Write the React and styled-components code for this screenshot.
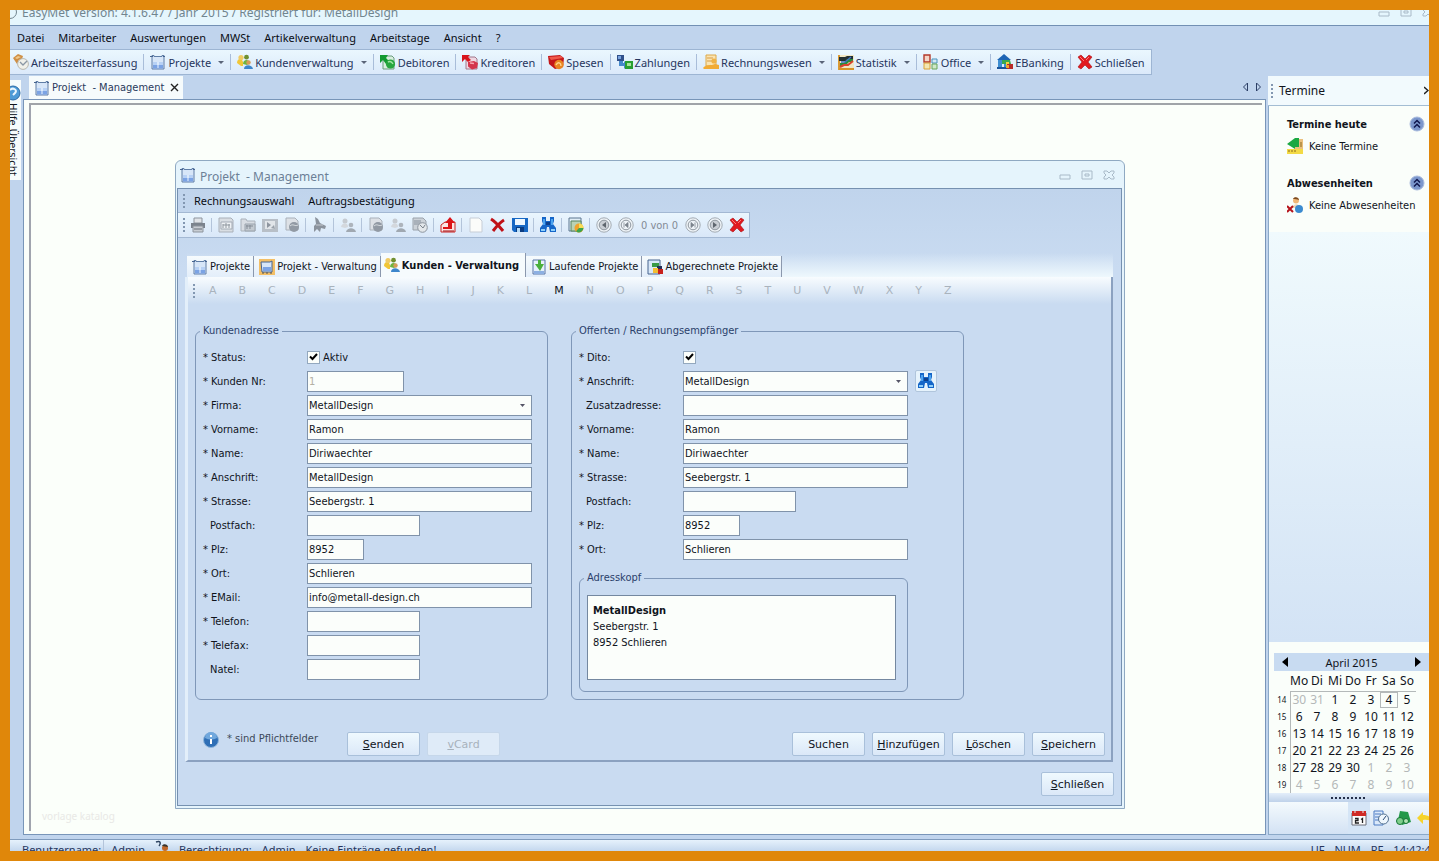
import React, { useState } from "react";
import styled, { createGlobalStyle, css } from "styled-components";

const ui = `"Noto Sans", "Open Sans", sans-serif`;
const tahoma = `"DejaVu Sans Condensed", "DejaVu Sans", sans-serif`;
const verdana = `"DejaVu Sans", sans-serif`;

const caret = `url("data:image/svg+xml,%3Csvg xmlns='http://www.w3.org/2000/svg' width='5' height='3'%3E%3Cpath d='M0 0h5L2.5 3z' fill='%23556'/%3E%3C/svg%3E")`;
const check = `url("data:image/svg+xml,%3Csvg xmlns='http://www.w3.org/2000/svg' width='9' height='8'%3E%3Cpath d='M1 3.5L3.5 6 8 1' fill='none' stroke='%23000' stroke-width='2'/%3E%3C/svg%3E")`;

/* ---------- icons ---------- */

const drawings = {
  clock: (
    <>
      <path d="M0 4 5 0l5 2-1 3-3 1-2 4-2-3z" fill="#cf8f45" />
      <path d="M2 4l3-2 3 1-4 2z" fill="#f0c98c" />
      <circle cx="10" cy="10" r="5.4" fill="#f1f1ea" stroke="#b9b7ae" />
      <path d="M7 8l3 3 4-4" fill="none" stroke="#8a97a5" strokeWidth="1.3" />
    </>
  ),
  project: (
    <>
      <path d="M2 1.5h2v1h8v-1h2V15H2z" fill="#d7e6f8" stroke="#5f7da6" />
      <path d="M0 2.5h3M13 2.5h2" stroke="#47648f" />
      <path d="M3 8h4.5v3H3zM8.5 8H13v3H8.5z" fill="#b7d1f5" />
      <path d="M3 11h10v3.5H3z" fill="#7ba3e4" />
      <path d="M8 8v6" stroke="#eef6ff" />
    </>
  ),
  people: (
    <>
      <path d="M0 9c0-5 5-5 6-1v4H4z" fill="#f1c637" />
      <circle cx="4" cy="3.5" r="2.6" fill="#f0ca62" />
      <circle cx="9.5" cy="3.2" r="2.4" fill="#6f8f2f" />
      <path d="M6 10c0-5 6-5 7-1l-3 2z" fill="#6eb43f" />
      <circle cx="11.5" cy="8.5" r="2.2" fill="#d49c58" />
      <path d="M7 15c0-5 8-5 9 0z" fill="#3d86cc" />
    </>
  ),
  debit: (
    <>
      <path d="M3 2h9l2 2v11H3z" fill="#d9efe0" stroke="#6b9b7c" />
      <path d="M0 1h8L6 4l3 3-3 3-3-4-3 3z" fill="#129a31" />
      <circle cx="10.5" cy="10" r="4.6" fill="#27a63f" />
      <path d="M8 8c2-1 4 0 5 2" fill="none" stroke="#a2e6a4" strokeWidth="1.4" />
    </>
  ),
  credit: (
    <>
      <path d="M4 3h9l2 2v10H4z" fill="#efd7e2" stroke="#a1788a" />
      <path d="M0 1h8L6 3l3 3-3 2-3-3-3 3z" fill="#d8141c" />
      <path d="M6 8l6-1 4 2-1 5-5 1.5-4-3z" fill="#d3364d" />
      <path d="M8 9l4 .5" stroke="#f7a9b3" strokeWidth="1.4" />
    </>
  ),
  expense: (
    <>
      <path d="M0 2l12-1 4 3-1 9-8 2-6-5z" fill="#c3171a" />
      <path d="M1 3l12-1 2 2-12 2z" fill="#ef5a4a" />
      <circle cx="11" cy="10.5" r="4.7" fill="#e98522" />
      <path d="M8 11c2-4 5-2 5 1" fill="none" stroke="#ffd48c" strokeWidth="1.4" />
    </>
  ),
  payment: (
    <>
      <path d="M0 1h7v6H0z" fill="#31508a" />
      <path d="M1 2h3v3H1z" fill="#7aa4df" />
      <path d="M2 7v5h5v3l4-4-4-4v2H6V7z" fill="#4689ca" />
      <path d="M8 7h8v8H8z" fill="#29a02f" />
      <path d="M10 9h4v3h-4z" fill="#a8e39c" />
    </>
  ),
  invoice: (
    <>
      <path d="M3 1h10v11H3z" fill="#fae4b1" stroke="#dca848" />
      <path d="M4 4h6M4 7h5" stroke="#d79b45" />
      <path d="M0 14c3-4 8-2 12-4l4 1v4H1z" fill="#f1ab35" />
      <circle cx="11" cy="7" r="2.6" fill="#efb245" />
    </>
  ),
  chart: (
    <>
      <path d="M0 1h16v14H0z" fill="#f1e6c3" />
      <path d="M1 1v14h15" fill="none" stroke="#d79326" strokeWidth="1.8" />
      <path d="M1 3h6l2-1h6v3h-4L8 7H1z" fill="#222f31" />
      <path d="M2 9h4l3-4h6v3h-4l-4 4H2z" fill="#2a8b3d" />
      <path d="M2 13l4-2h4l5-4" fill="none" stroke="#d8432d" strokeWidth="2" />
      <path d="M3 8h4l6-5" fill="none" stroke="#3f70c4" strokeWidth="1.4" />
    </>
  ),
  office: (
    <>
      <path d="M1 1h6v7H1z" fill="#f4d5c6" stroke="#b3392a" strokeWidth="1.4" />
      <path d="M9 5h5v4H9z" fill="#d3e9f7" stroke="#4d93bb" />
      <path d="M1 9h6v6H1z" fill="#f3e7b3" stroke="#d9a239" />
      <path d="M9 10h5v5H9z" fill="#cfe8ca" stroke="#68a65b" />
    </>
  ),
  bank: (
    <>
      <path d="M0 6 7 0l7 6z" fill="#1e65b5" />
      <path d="M1 6h4v8H1zM7 6h3v8H7z" fill="#3e8ed2" />
      <path d="M0 13h10v2H0z" fill="#1b539a" />
      <path d="M5 6h8l1 4H5z" fill="#39a84f" />
      <path d="M9 8h3v3H9z" fill="#f4d13f" />
      <path d="M10 10h6v5h-6z" fill="#b82b28" />
      <path d="M9 11h3v3H9z" fill="#f0a62a" />
    </>
  ),
  cross: (
    <>
      <path
        d="M1 3 4 1l4 4 4-4 3 2-4 5 4 5-3 2-4-4-4 4-3-2 4-5z"
        fill="#e1191f"
        stroke="#a90f12"
        strokeWidth=".6"
      />
      <path d="M3 3l4 4M12 3l-3 3" stroke="#ff7a78" />
    </>
  ),
  thinCross: (
    <path d="M1 2c5 3 8 7 12 12M14 3C9 6 6 10 3 14" fill="none" stroke="#c01117" strokeWidth="3" />
  ),
  print: (
    <>
      <path d="M4 1h8v5H4z" fill="#e0e4e8" stroke="#8d949d" />
      <path d="M1 6h14v5H1z" fill="#7b838d" />
      <path d="M3 9h10v6H3z" fill="#c8cdd3" stroke="#8d949d" />
      <path d="M4 12h8" stroke="#666e78" />
    </>
  ),
  grayDoc: (
    <>
      <path d="M1 1h12l2 2v12H1z" fill="#d9dee3" stroke="#a9b0b9" />
      <path d="M3 5h11v7H3z" fill="#eef1f4" stroke="#a3abb5" />
      <path d="M5 7v4M8 6v5M11 7v4M5 8h7" stroke="#8f979f" />
    </>
  ),
  grayFolder: (
    <>
      <path d="M1 2h5l1 2h8v10H1z" fill="#d8dde3" stroke="#aab2bb" />
      <path d="M5 7h10v7H5z" fill="#c2c9d0" stroke="#9aa3ad" />
      <path d="M6 9h7M7 8v4M10 8v4" stroke="#838b95" />
    </>
  ),
  grayImage: (
    <>
      <path d="M0 2h16v13H0z" fill="#b8bfc7" />
      <path d="M3 4h10v8H3z" fill="#e1e5e9" />
      <path d="M5 5l4 3-4 3z" fill="#8d959f" />
      <path d="M9 11l3-3 1 4z" fill="#9aa2ab" />
    </>
  ),
  grayBall: (
    <>
      <path d="M2 1h9l3 3v9H2z" fill="#dde1e6" stroke="#a9b1ba" />
      <circle cx="10" cy="10" r="5" fill="#929aa4" />
      <path d="M6 9c3-3 5 1 8-1" stroke="#d5dade" fill="none" />
    </>
  ),
  grayClock: (
    <>
      <path d="M1 1h10l3 3v9H1z" fill="#ccd2d8" stroke="#9aa2ab" />
      <path d="M2 3h7v5H2z" fill="#a9b1ba" />
      <circle cx="10.5" cy="10.5" r="4.8" fill="#e3e7ea" stroke="#8d959f" />
      <path d="M8 8l3 3 2-3" fill="none" stroke="#7c848d" />
    </>
  ),
  grayPointer: (
    <>
      <path d="M3 0l3 2 2 4 6 3-1 3-4-1-1 4-3-3-3 3V9l2-2z" fill="#8b939d" />
      <path d="M4 8h7" stroke="#c5cad0" />
    </>
  ),
  grayPeople: (
    <>
      <circle cx="5" cy="4" r="2.5" fill="#c6cbd1" />
      <path d="M1 10c1-5 7-5 7 0l-3 1z" fill="#d4d8dd" />
      <circle cx="11" cy="8" r="2.3" fill="#adb4bc" />
      <path d="M6 15c1-5 9-5 10 0z" fill="#a0a8b1" />
    </>
  ),
  up: (
    <>
      <path d="M1 8l4-3h10v10H1z" fill="#fbe5e4" stroke="#c92525" />
      <path d="M3 10h5V6H5l5-6 5 6h-3v6H3z" fill="#dc1318" />
      <path d="M3 14h11" stroke="#a30b0e" />
    </>
  ),
  blank: <path d="M2 1h9l3 3v11H2z" fill="#fbfcfa" stroke="#c6cdd6" />,
  save: (
    <>
      <path d="M0 1h16v14H2l-2-2z" fill="#1768c4" />
      <path d="M3 2h10v6H3z" fill="#eef8ff" />
      <path d="M4 10h8v5H4z" fill="#0b3c81" />
      <path d="M5 11h3v4H5z" fill="#b7dcf7" />
    </>
  ),
  binoculars: (
    <>
      <path d="M2 0h4v4h4V0h4v4l-1 3 3 4v4h-6l-1-5H7l-1 5H0v-4l3-4-1-3z" fill="#1566c8" />
      <path d="M3 2h2v6H3zM11 2h2v6h-2z" fill="#4ba3ef" />
      <path d="M1 12h4v2H1zM11 12h4v2h-4z" fill="#8fd0fb" />
      <path d="M6 5h4v3H6z" fill="#0c3f8c" />
    </>
  ),
  report: (
    <>
      <path d="M1 1h12v13H1z" fill="#e1eef6" stroke="#5c7790" />
      <path d="M3 4h10v10H3z" fill="#b9d3b5" stroke="#57845e" />
      <circle cx="11" cy="11" r="4.5" fill="#f0a32c" />
      <path d="M11 11V6.5A4.5 4.5 0 0 1 15.5 11z" fill="#f6dd55" />
      <path d="M11 11h4.5A4.5 4.5 0 0 1 8 14.3z" fill="#3da44b" />
    </>
  ),
  prev: (
    <>
      <circle cx="8" cy="8" r="7.2" fill="#eef3f7" stroke="#a3abb3" />
      <circle cx="8" cy="8" r="4.8" fill="#c9ced4" stroke="#8f979f" />
      <path d="M10 5v6L6 8z" fill="#5f666e" />
    </>
  ),
  first: (
    <>
      <circle cx="8" cy="8" r="7.2" fill="#eef3f7" stroke="#a3abb3" />
      <circle cx="8" cy="8" r="4.8" fill="none" stroke="#8f979f" />
      <path d="M6 5.5v5M10 5.5v5L7 8z" fill="#7c848d" stroke="#7c848d" strokeWidth=".8" />
    </>
  ),
  last: (
    <>
      <circle cx="8" cy="8" r="7.2" fill="#eef3f7" stroke="#a3abb3" />
      <circle cx="8" cy="8" r="4.8" fill="none" stroke="#8f979f" />
      <path d="M10 5.5v5M6 5.5v5L9 8z" fill="#7c848d" stroke="#7c848d" strokeWidth=".8" />
    </>
  ),
  next: (
    <>
      <circle cx="8" cy="8" r="7.2" fill="#eef3f7" stroke="#a3abb3" />
      <circle cx="8" cy="8" r="4.8" fill="#c9ced4" stroke="#8f979f" />
      <path d="M6 5v6l4-3z" fill="#5f666e" />
    </>
  ),
  projectFolder: (
    <>
      <path d="M0 0h16v16H0z" fill="#f3bf66" />
      <path d="M2 3h9l2-1v11H3z" fill="#d7e6f8" stroke="#47648f" />
      <path d="M4 8h8v4H4z" fill="#7ba3e4" />
      <path d="M4 13v2M8 13v2M12 13v2" stroke="#555" />
    </>
  ),
  running: (
    <>
      <path d="M2 1h12v14H2z" fill="#e6f0fb" stroke="#5875a5" />
      <path d="M3 12h10v3H3z" fill="#8db0e2" />
      <path d="M7 1h3v4h3l-4 7-5-7h3z" fill="#4aaf3c" />
    </>
  ),
  billed: (
    <>
      <path d="M1 1h12v14H1z" fill="#d9e8f8" stroke="#47648f" />
      <path d="M5 4h7v4H5z" fill="#3a9a46" />
      <path d="M10 7h5v4h-5z" fill="#222f55" />
      <path d="M6 9h5v5H6z" fill="#f2bd32" />
      <path d="M11 10h5v5h-5z" fill="#c8211d" />
    </>
  ),
  info: (
    <>
      <circle cx="8" cy="8" r="7.5" fill="#2f6fb6" stroke="#8fb5da" />
      <path d="M2 6a6 6 0 0 1 12 0c-4 2-8 2-12 0z" fill="#71a8dd" />
      <path d="M8 3v2M8 7v5" stroke="#fff" strokeWidth="2" />
    </>
  ),
  help: (
    <>
      <circle cx="8" cy="8" r="7" fill="#4d9ad6" stroke="#2b6aa8" />
      <path d="M5 5c3-3 8 0 5 3L8 10" fill="none" stroke="#eaf6ff" strokeWidth="2" />
    </>
  ),
  note: (
    <>
      <path d="M8 1h8v14H8z" fill="#eac07d" />
      <path d="M0 11h16v5H0z" fill="#f3da45" />
      <path d="M8 0h4v9H8v2L0 6z" fill="#1ba843" />
      <path d="M2 12v2M5 12v2M8 12v2M14 4v5" stroke="#8a6b1d" />
    </>
  ),
  absent: (
    <>
      <circle cx="9" cy="3.5" r="3" fill="#f0b877" />
      <path d="M6 2c1-3 6-2 6 1-2-1-4-1-6-1z" fill="#7a4a20" />
      <path d="M5 11c1-5 8-5 8 0z" fill="#edd9b8" />
      <circle cx="12" cy="12" r="4" fill="#3b8bd0" />
      <path d="M0 9l6 6M6 9l-6 6" stroke="#b5131b" strokeWidth="2" />
    </>
  ),
  collapse: (
    <>
      <circle cx="8" cy="8" r="7" fill="#7c97cc" stroke="#a9bbdd" />
      <path d="M5 7.5l3-3 3 3M5 11.5l3-3 3 3" fill="none" stroke="#10184f" strokeWidth="1.5" />
    </>
  ),
  calendar: (
    <>
      <path d="M1 3h14v12H1z" fill="#fdfdfd" stroke="#6c6f78" />
      <path d="M1 1h14v5H1z" fill="#cf2a24" />
      <path d="M4 0v3M12 0v3" stroke="#e9e9e9" />
      <path d="M4 8.5h3v2H4.5V13H8M10 9.5l1.5-1V13" fill="none" stroke="#222" strokeWidth="1.3" />
    </>
  ),
  schedule: (
    <>
      <path d="M1 1h9v14H1z" fill="#dbe9fa" stroke="#4a7bc3" />
      <path d="M2 4h6M2 7h4M2 10h4" stroke="#4a7bc3" />
      <circle cx="10.5" cy="9" r="5" fill="#eef6fd" stroke="#52708f" />
      <path d="M10 10l3-4" stroke="#2b4a75" />
    </>
  ),
  money: (
    <>
      <path d="M5 1l8 1 3 10-9 3-4-5z" fill="#23994a" />
      <circle cx="5" cy="11" r="3.5" fill="#7fcf8c" stroke="#147435" />
      <circle cx="11" cy="11" r="2.5" fill="#b2e5b4" stroke="#147435" />
    </>
  ),
  undo: <path d="M0 8l6-6v3c6 0 9 3 9 8-2-3-5-4-9-3v4z" fill="#f6d42c" />,
  user: (
    <>
      <path d="M1 2c5-2 5 2 3 4" fill="none" stroke="#2c4361" strokeWidth="1.5" />
      <circle cx="10" cy="8" r="3" fill="#c1672a" />
      <path d="M7 6c1-3 6-2 6 1z" fill="#3a342b" />
    </>
  ),
};

const Icon = ({ name }) => (
  <IconSvg viewBox="0 0 16 16" aria-hidden="true">
    {drawings[name]}
  </IconSvg>
);

const WindowControls = () => (
  <ControlsSvg viewBox="0 0 56 12" aria-hidden="true">
    <path d="M1 6h10v4H1z" />
    <path d="M23 2h10v8H23zM26 5h4v2h-4z" />
    <path d="M45 2h3l2 2 2-2h3v2l-2 2 2 2v2h-3l-2-2-2 2h-3V8l2-2-2-2z" />
  </ControlsSvg>
);

/* ---------- data ---------- */

const menus = ["Datei", "Mitarbeiter", "Auswertungen", "MWSt", "Artikelverwaltung", "Arbeitstage", "Ansicht", "?"];

const tools = [
  { icon: "clock", text: "Arbeitszeiterfassung" },
  { icon: "project", text: "Projekte", drop: true },
  { icon: "people", text: "Kundenverwaltung", drop: true },
  { icon: "debit", text: "Debitoren" },
  { icon: "credit", text: "Kreditoren" },
  { icon: "expense", text: "Spesen" },
  { icon: "payment", text: "Zahlungen" },
  { icon: "invoice", text: "Rechnungswesen", drop: true },
  { icon: "chart", text: "Statistik", drop: true },
  { icon: "office", text: "Office", drop: true },
  { icon: "bank", text: "EBanking" },
  { icon: "cross", text: "Schließen" },
];

const dialogTools = [
  ["print"],
  ["grayDoc", "grayFolder", "grayImage", "grayBall"],
  ["grayPointer"],
  ["grayPeople"],
  ["grayBall", "grayPeople", "grayClock"],
  ["up"],
  ["blank", "thinCross", "save"],
  ["binoculars"],
  ["report"],
];

const tabs = [
  { icon: "project", text: "Projekte" },
  { icon: "projectFolder", text: "Projekt - Verwaltung" },
  { icon: "people", text: "Kunden - Verwaltung" },
  { icon: "running", text: "Laufende Projekte" },
  { icon: "billed", text: "Abgerechnete Projekte" },
];

const customer = [
  { label: "Kunden Nr:", required: true, value: "1", size: "number", disabled: true },
  { label: "Firma:", required: true, value: "MetallDesign", select: true },
  { label: "Vorname:", required: true, value: "Ramon" },
  { label: "Name:", required: true, value: "Diriwaechter" },
  { label: "Anschrift:", required: true, value: "MetallDesign" },
  { label: "Strasse:", required: true, value: "Seebergstr. 1" },
  { label: "Postfach:", value: "", size: "half" },
  { label: "Plz:", required: true, value: "8952", size: "zip" },
  { label: "Ort:", required: true, value: "Schlieren" },
  { label: "EMail:", required: true, value: "info@metall-design.ch" },
  { label: "Telefon:", required: true, value: "", size: "half" },
  { label: "Telefax:", required: true, value: "", size: "half" },
  { label: "Natel:", value: "", size: "half" },
];

const recipient = [
  { label: "Anschrift:", required: true, value: "MetallDesign", select: true, search: true },
  { label: "Zusatzadresse:", value: "" },
  { label: "Vorname:", required: true, value: "Ramon" },
  { label: "Name:", required: true, value: "Diriwaechter" },
  { label: "Strasse:", required: true, value: "Seebergstr. 1" },
  { label: "Postfach:", value: "", size: "half" },
  { label: "Plz:", required: true, value: "8952", size: "zip" },
  { label: "Ort:", required: true, value: "Schlieren" },
];

const weekdays = ["Mo", "Di", "Mi", "Do", "Fr", "Sa", "So"];
const weeks = [
  [14, 30, 31, 1, 2, 3, 4, 5],
  [15, 6, 7, 8, 9, 10, 11, 12],
  [16, 13, 14, 15, 16, 17, 18, 19],
  [17, 20, 21, 22, 23, 24, 25, 26],
  [18, 27, 28, 29, 30, 1, 2, 3],
  [19, 4, 5, 6, 7, 8, 9, 10],
];

const isOtherMonth = (row, day) => (row === 0 && day > 20) || (row > 3 && day < 20);

/* ---------- parts ---------- */

const Field = ({ group, field }) => {
  const id = `${group}-${field.label}`;
  return (
    <FieldRow>
      <FieldLabel htmlFor={id} $required={field.required}>
        {field.required && <Star>*</Star>}
        {field.label}
      </FieldLabel>
      {field.select ? (
        <Select id={id} defaultValue={field.value}>
          <option>{field.value}</option>
        </Select>
      ) : (
        <Input id={id} type="text" defaultValue={field.value} $size={field.size} disabled={field.disabled} />
      )}
      {field.search && (
        <SearchButton type="button" aria-label="Suchen">
          <Icon name="binoculars" />
        </SearchButton>
      )}
    </FieldRow>
  );
};

const Calendar = () => (
  <CalendarWrap>
    <CalendarHead>
      <CalendarNav type="button" aria-label="Zurück">
        <svg width="6" height="10"><path d="M6 0v10L0 5z" /></svg>
      </CalendarNav>
      April 2015
      <CalendarNav type="button" aria-label="Weiter">
        <svg width="6" height="10"><path d="M0 0v10l6-5z" /></svg>
      </CalendarNav>
    </CalendarHead>
    <CalendarTable>
      <thead>
        <tr>
          <WeekNo />
          {weekdays.map((day) => (
            <DayHead key={day}>{day}</DayHead>
          ))}
        </tr>
      </thead>
      <tbody>
        {weeks.map(([week, ...days], row) => (
          <tr key={week}>
            <WeekNo $line>{week}</WeekNo>
            {days.map((day) => (
              <Day key={day} $muted={isOtherMonth(row, day)} $today={row === 0 && day === 4}>
                {day}
              </Day>
            ))}
          </tr>
        ))}
      </tbody>
    </CalendarTable>
  </CalendarWrap>
);

const ProjectDialog = () => {
  const [active, setActive] = useState("Kunden - Verwaltung");
  const [letter, setLetter] = useState("M");

  return (
    <Dialog>
      <DialogTitle>
        <Icon name="project" />
        <h1>Projekt&nbsp; - Management</h1>
        <WindowControls />
      </DialogTitle>
      <DialogBody>
        <DialogMenu>
          <Grip />
          <MenuButton type="button">Rechnungsauswahl</MenuButton>
          <MenuButton type="button">Auftragsbestätigung</MenuButton>
        </DialogMenu>
        <DialogToolbar>
          <Grip />
          {dialogTools.map((group, i) => (
            <React.Fragment key={i}>
              {group.map((icon) => (
                <IconButton type="button" key={icon} aria-label={icon}>
                  <Icon name={icon} />
                </IconButton>
              ))}
              <ToolSeparator />
            </React.Fragment>
          ))}
          <IconButton type="button" aria-label="Vorheriger"><Icon name="prev" /></IconButton>
          <IconButton type="button" aria-label="Erster"><Icon name="first" /></IconButton>
          <Counter>0 von 0</Counter>
          <IconButton type="button" aria-label="Letzter"><Icon name="last" /></IconButton>
          <IconButton type="button" aria-label="Nächster"><Icon name="next" /></IconButton>
          <IconButton type="button" aria-label="Abbrechen"><Icon name="cross" /></IconButton>
        </DialogToolbar>

        <Tabs>
          {tabs.map((tab) => (
            <Tab key={tab.text} type="button" $active={tab.text === active} onClick={() => setActive(tab.text)}>
              <Icon name={tab.icon} />
              {tab.text}
            </Tab>
          ))}
        </Tabs>
        <TabPage>
          <Letters>
            <Grip />
            {"ABCDEFGHIJKLMNOPQRSTUVWXYZ".split("").map((l) => (
              <Letter key={l} type="button" $active={l === letter} onClick={() => setLetter(l)}>
                {l}
              </Letter>
            ))}
          </Letters>
          <Forms>
            <Group>
              <legend>Kundenadresse</legend>
              <FieldRow>
                <FieldLabel htmlFor="status" $required><Star>*</Star>Status:</FieldLabel>
                <Checkbox id="status" type="checkbox" defaultChecked />
                <label htmlFor="status">Aktiv</label>
              </FieldRow>
              {customer.map((field) => (
                <Field key={field.label} group="kunde" field={field} />
              ))}
            </Group>
            <Group $wide>
              <legend>Offerten / Rechnungsempfänger</legend>
              <FieldRow>
                <FieldLabel htmlFor="dito" $required><Star>*</Star>Dito:</FieldLabel>
                <Checkbox id="dito" type="checkbox" defaultChecked />
              </FieldRow>
              {recipient.map((field) => (
                <Field key={field.label} group="offerte" field={field} />
              ))}
              <AddressGroup>
                <legend>Adresskopf</legend>
                <Address>
                  <strong>MetallDesign</strong>
                  <br />
                  Seebergstr. 1
                  <br />
                  8952 Schlieren
                </Address>
              </AddressGroup>
            </Group>
          </Forms>
          <Actions>
            <Hint>
              <Icon name="info" />
              * sind Pflichtfelder
            </Hint>
            <Button type="button"><u>S</u>enden</Button>
            <Button type="button" disabled><u>v</u>Card</Button>
            <Spacer />
            <Button type="button">Suchen</Button>
            <Button type="button"><u>H</u>inzufügen</Button>
            <Button type="button"><u>L</u>öschen</Button>
            <Button type="button"><u>S</u>peichern</Button>
          </Actions>
        </TabPage>
        <DialogFooter>
          <Button type="button"><u>S</u>chließen</Button>
        </DialogFooter>
      </DialogBody>
    </Dialog>
  );
};

const App = () => (
  <>
    <GlobalStyle />
    <Frame>
      <TitleBar>
        <TitleIcon />
        <span>EasyMet Version: 4.1.6.47 / Jahr 2015 / Registriert für: MetallDesign</span>
        <WindowControls />
      </TitleBar>
      <MenuBar>
        {menus.map((menu) => (
          <MenuButton type="button" key={menu}>{menu}</MenuButton>
        ))}
      </MenuBar>
      <Toolbar>
        {tools.map((tool) => (
          <ToolButton type="button" key={tool.text}>
            <Icon name={tool.icon} />
            {tool.text}
            {tool.drop && <DropArrow />}
          </ToolButton>
        ))}
      </Toolbar>

      <Workspace>
        <SideStrip>
          <SideTab type="button">
            <Icon name="help" />
            <span>Hilfe Übersicht</span>
          </SideTab>
        </SideStrip>
        <Main>
          <DocTabs>
            <DocTab>
              <Icon name="project" />
              Projekt&nbsp; - Management
              <CloseTab type="button" aria-label="Tab schließen">
                <svg width="9" height="9"><path d="M1 1l7 7M8 1 1 8" stroke="#222" strokeWidth="1.4" /></svg>
              </CloseTab>
            </DocTab>
            <TabArrows width="20" height="10">
              <path d="M5.5 1v8L1.500 5zM14.5 1v8l4-4z" />
            </TabArrows>
          </DocTabs>
          <Canvas>
            <CanvasInner>
              <ProjectDialog />
              <Watermark>vorlage katalog</Watermark>
            </CanvasInner>
          </Canvas>
        </Main>
        <Aside>
          <AsideHead>
            <Grip />
            <span>Termine</span>
            <svg width="5" height="9"><path d="M0 1l4 3.500L0 8" fill="none" stroke="#222" strokeWidth="1.5" /></svg>
          </AsideHead>
          <AsideBody>
            <Notices>
              <section>
                <h2>Termine heute<Icon name="collapse" /></h2>
                <p><Icon name="note" />Keine Termine</p>
              </section>
              <section>
                <h2>Abwesenheiten<Icon name="collapse" /></h2>
                <p><Icon name="absent" />Keine Abwesenheiten</p>
              </section>
            </Notices>
            <Fade />
            <Calendar />
            <Splitter />
            <AsideIcons>
              <AsideIcon type="button" aria-label="Kalender" $active><Icon name="calendar" /></AsideIcon>
              <AsideIcon type="button" aria-label="Zeiten"><Icon name="schedule" /></AsideIcon>
              <AsideIcon type="button" aria-label="Debitoren"><Icon name="money" /></AsideIcon>
              <AsideIcon type="button" aria-label="Verlauf"><Icon name="undo" /></AsideIcon>
            </AsideIcons>
          </AsideBody>
        </Aside>
      </Workspace>

      <StatusBar>
        <StatusItem $tight>Benutzername:</StatusItem>
        <StatusItem $line>Admin</StatusItem>
        <Icon name="user" />
        <StatusItem>Berechtigung:</StatusItem>
        <StatusItem>Admin</StatusItem>
        <StatusItem>Keine Einträge gefunden!</StatusItem>
        <Spacer />
        <StatusKeys>
          <span>UF</span>
          <span>NUM</span>
          <span>RF</span>
          <span>14:42:47</span>
        </StatusKeys>
      </StatusBar>
    </Frame>
  </>
);

/* ---------- styles ---------- */

const GlobalStyle = createGlobalStyle`
  *, *::before, *::after {
    box-sizing: border-box;
  }
  body {
    margin: 0;
    font-family: ${tahoma};
    font-size: 11px;
    color: #10141c;
  }
  button, input, select {
    font: inherit;
    color: inherit;
    margin: 0;
    padding: 0;
  }
  button {
    border: 0;
    background: none;
    white-space: nowrap;
  }
`;

const IconSvg = styled.svg`
  width: 16px;
  height: 16px;
  flex: none;
`;

const ControlsSvg = styled.svg`
  width: 56px;
  height: 12px;
  flex: none;
  margin-left: auto;
  fill: none;
  stroke: #a9bac8;
`;

const Spacer = styled.div`
  flex: 1;
`;

const Frame = styled.div`
  height: 100vh;
  min-height: 780px;
  display: flex;
  flex-direction: column;
  overflow: hidden;
  border: 10px solid #e0870a;
  background: #c0d4ed;
`;

const TitleBar = styled.header`
  height: 16px;
  flex: none;
  display: flex;
  align-items: center;
  gap: 5px;
  padding: 0 0 11px;
  overflow: hidden;
  background: #e5f6fd;
  border-bottom: 1px solid #7290b4;
  color: #71858f;
  font: 12px ${ui};
  white-space: nowrap;

  ${ControlsSvg} {
    margin-right: -5px;
  }
`;

const TitleIcon = styled.i`
  width: 14px;
  height: 14px;
  margin-left: -7px;
  border: 1px solid #71858f;
  border-radius: 50%;
`;

const MenuBar = styled.nav`
  height: 23px;
  flex: none;
  display: flex;
  align-items: center;
  gap: 14px;
  padding: 0 7px;
`;

const MenuButton = styled.button`
  font: 11px ${ui};
  color: #0a0d14;
`;

const Toolbar = styled.div`
  height: 26px;
  flex: none;
  align-self: flex-start;
  display: flex;
  align-items: center;
  padding: 0 0 0 3px;
  background: linear-gradient(#eaf7fe, #dbe9fa);
  border: 1px solid #9db5d3;
  border-left: 0;
`;

const ToolButton = styled.button`
  height: 16px;
  display: flex;
  align-items: center;
  gap: 2px;
  padding: 0 6px;
  color: #26355d;
  font: 11px ${ui};

  &:first-child {
    padding-left: 0;
  }
  & + & {
    border-left: 1px solid #a9bdd9;
  }
`;

const DropArrow = styled.i`
  margin: 0 0 0 5px;
  border: 3px solid transparent;
  border-top-color: #5a6478;
  border-bottom: 0;
`;

const Workspace = styled.div`
  flex: 1;
  min-height: 0;
  display: grid;
  grid-template-columns: 13px 1fr 163px;
`;

const SideStrip = styled.div`
  padding: 5px 2px 0 0;
  overflow: hidden;
`;

const SideTab = styled.button`
  width: 11px;
  height: 100px;
  display: flex;
  flex-direction: column;
  align-items: center;
  padding-top: 5px;
  padding-right: 6px;
  background: #f6fbfc;
  overflow: hidden;

  span {
    writing-mode: vertical-rl;
    margin-top: 2px;
    font: 11px ${tahoma};
  }
`;

const Main = styled.main`
  min-width: 0;
  display: flex;
  flex-direction: column;
  padding-bottom: 4px;
`;

const DocTabs = styled.div`
  height: 24px;
  flex: none;
  display: flex;
  align-items: flex-end;
  justify-content: space-between;
  padding: 0 4px 0 6px;
`;

const DocTab = styled.div`
  height: 23px;
  display: flex;
  align-items: center;
  gap: 2px;
  padding: 0 4px 0 5px;
  background: #f6fbfc;
  color: #2a3a5c;
`;

const CloseTab = styled.button`
  display: flex;
  margin-left: 4px;
`;

const TabArrows = styled.svg`
  align-self: center;
  fill: none;
  stroke: #2c3f66;
`;

const Canvas = styled.div`
  flex: 1;
  min-height: 0;
  padding: 3px 3px 3px 5px;
  background: #fafefa;
  border: 1px solid #7895b8;
`;

const CanvasInner = styled.div`
  height: 100%;
  padding: 55px 137px 0 144px;
  border-top: 2px solid #a0a4a8;
  border-left: 2px solid #a0a4ae;
  background: #fbfffa;
`;

const Watermark = styled.div`
  margin: 1px 0 0 -133px;
  color: #e9e9e6;
  font: 10px ${ui};
  line-height: 12px;
`;

const Dialog = styled.section`
  border: 1px solid #8fa9c2;
  border-radius: 6px 6px 0 0;
  background: #e5f4fc;
  padding: 0 2px 2px 1px;
`;

const DialogTitle = styled.header`
  height: 27px;
  display: flex;
  align-items: center;
  gap: 4px;
  padding: 0 7px 0 3px;

  h1 {
    margin: 3px 0 0;
    color: #6c8097;
    font: 12px ${ui};
  }
`;

const DialogBody = styled.div`
  background: linear-gradient(#c0d4ec, #c9dbf1 80px, #c9dbf1);
  border: 1px solid #7691b0;
`;

const DialogMenu = styled.nav`
  height: 23px;
  display: flex;
  align-items: center;
  gap: 14px;
  padding-left: 5px;

  & > i {
    margin-right: -5px;
  }
`;

const Grip = styled.i`
  width: 2px;
  height: 14px;
  flex: none;
  background: repeating-linear-gradient(#8297b1 0 2px, transparent 2px 4px);
`;

const DialogToolbar = styled.div`
  width: fit-content;
  height: 26px;
  display: flex;
  align-items: center;
  padding: 0 1px 0 5px;
  background: linear-gradient(#eaf6fe, #d9e7f8);
  border: 1px solid #a3b8d3;
  border-left: 0;

  & > i:first-child {
    margin-right: 2px;
  }
`;

const IconButton = styled.button`
  width: 22px;
  height: 22px;
  display: flex;
  align-items: center;
  justify-content: center;
`;

const ToolSeparator = styled.i`
  width: 1px;
  height: 14px;
  margin: 0 3px 0 2px;
  background: #b3c4da;
`;

const Counter = styled.span`
  width: 45px;
  text-align: center;
  color: #838b95;
  white-space: nowrap;
`;

const Tabs = styled.div`
  height: 24px;
  display: flex;
  align-items: flex-end;
  margin: 15px 8px 0 9px;
  background: linear-gradient(transparent, #eef8fd);
`;

const Tab = styled.button`
  height: 21px;
  display: flex;
  align-items: center;
  gap: 2px;
  padding: 0 3px 0 5px;
  background: linear-gradient(#f6fbfd, #e3eefa);
  border-right: 1px solid #8b98ad;

  ${(props) =>
    props.$active &&
    css`
      height: 24px;
      padding: 0 6px 0 3px;
      background: #f6fbfd;
      font-weight: bold;
    `}
`;

const TabPage = styled.div`
  margin: 0 8px 0 7px;
  border-left: 3px solid #e3effa;
  border-right: 2px solid #8ba1c0;
  border-bottom: 2px solid #8ba1c0;
`;

const Letters = styled.div`
  height: 27px;
  display: flex;
  align-items: center;
  padding-left: 5px;
  overflow: hidden;
  background: linear-gradient(#f8fcfe, #c9dbf1);
`;

const Letter = styled.button`
  padding: 0 11px;
  font: 11px ${verdana};
  color: ${(props) => (props.$active ? "#10141c" : "#a9b3bd")};

  i + & {
    margin-left: 3px;
  }
`;

const Forms = styled.div`
  display: flex;
  align-items: stretch;
  gap: 23px;
  padding: 20px 7px 0;
`;

const groupBox = css`
  min-width: 0;
  margin: 0;
  border: 1px solid #7f97b8;
  border-radius: 6px;

  & > legend {
    height: 14px;
    line-height: 14px;
    margin-left: -3px;
    padding: 0 3px;
    color: #2b3f6b;
  }
`;

const Group = styled.fieldset`
  ${groupBox}
  width: ${(props) => (props.$wide ? "393px" : "353px")};
  flex: none;
  padding: 7px;
`;

const FieldRow = styled.div`
  height: 24px;
  display: flex;
  align-items: center;
  gap: 3px;
`;

const FieldLabel = styled.label`
  width: 101px;
  flex: none;
  white-space: nowrap;
  padding-left: ${(props) => (props.$required ? 0 : 7)}px;
`;

const Star = styled.span`
  display: inline-block;
  width: 8px;
`;

const sizes = { number: 97, half: 113, zip: 57 };

const control = css`
  height: 21px;
  padding: 0 1px;
  background: #fbfefb;
  border: 1px solid #8093aa;
  border-radius: 0;
  outline: 0;
`;

const Input = styled.input`
  ${control}
  width: ${(props) => sizes[props.$size] || 225}px;

  &:disabled {
    color: #b3b0a4;
  }
`;

const Select = styled.select`
  ${control}
  width: 225px;
  appearance: none;
  background: #fbfefb ${caret} no-repeat right 6px center;
`;

const Checkbox = styled.input`
  appearance: none;
  width: 13px;
  height: 13px;
  border: 1px solid #93a8be;
  background: #fbfefb;

  &:checked {
    background: #fbfefb ${check} no-repeat center;
  }
`;

const SearchButton = styled.button`
  width: 22px;
  height: 22px;
  margin-left: 4px;
  display: flex;
  align-items: center;
  justify-content: center;
  background: #e6f3fc;
  border: 1px solid #b0c5dc;
  border-radius: 2px;
`;

const AddressGroup = styled.fieldset`
  ${groupBox}
  width: 329px;
  margin-top: 10px;
  padding: 10px 11px 11px 7px;
`;

const Address = styled.div`
  height: 85px;
  padding: 7px 5px;
  background: #fbfefb;
  border: 1px solid #7488a0;
  line-height: 16px;
`;

const Actions = styled.div`
  display: flex;
  align-items: center;
  gap: 7px;
  padding: 32px 6px 4px 15px;
`;

const Hint = styled.div`
  width: 137px;
  height: 24px;
  display: flex;
  align-items: flex-start;
  gap: 8px;
  color: #3c4858;
  line-height: 14px;
`;

const Button = styled.button`
  width: 73px;
  height: 24px;
  background: linear-gradient(#eff9fe, #dbe8f8);
  border: 1px solid #a9c0da;
  border-radius: 2px;
  font: 11px ${verdana};

  &:disabled {
    color: #a8b2bc;
    background: #dfebf8;
    border-color: #c6d7ea;
  }
`;

const DialogFooter = styled.footer`
  display: flex;
  justify-content: flex-end;
  padding: 10px 7px 9px;
`;

const Aside = styled.aside`
  display: flex;
  flex-direction: column;
  min-width: 0;
  padding: 1px 0 4px 2px;
  overflow: hidden;
`;

const AsideHead = styled.header`
  height: 30px;
  flex: none;
  display: flex;
  align-items: center;
  gap: 6px;
  padding-left: 3px;
  background: #f2fafd;
  border-bottom: 1px solid #a3bdd3;
  font: 12px ${ui};

  span {
    flex: 1;
  }
`;

const AsideBody = styled.div`
  flex: 1;
  display: flex;
  flex-direction: column;
  background: #fafefa;
  border-left: 1px solid #8ba9c8;
  border-bottom: 1px solid #8ba9c8;
`;

const Notices = styled.div`
  display: grid;
  gap: 21px;
  padding: 10px 4px 19px 18px;

  h2,
  p {
    height: 16px;
    display: flex;
    align-items: center;
    justify-content: space-between;
    margin: 0;
    white-space: nowrap;
  }
  h2 {
    font: bold 11px ${tahoma};
  }
  p {
    justify-content: flex-start;
    gap: 6px;
    margin-top: 6px;
  }
`;

const Fade = styled.div`
  flex: 1;
  background: linear-gradient(#f0fafd, #d3e3f5);
`;

const CalendarWrap = styled.div`
  padding: 11px 0 0 5px;
  font: 12px ${ui};
`;

const CalendarHead = styled.div`
  height: 18px;
  display: flex;
  align-items: center;
  justify-content: space-between;
  padding: 0 8px;
  background: #c8dbf1;
  font: 11px ${ui};
`;

const CalendarNav = styled.button`
  display: flex;
`;

const CalendarTable = styled.table`
  border-collapse: collapse;
  table-layout: fixed;
  width: 142px;

  th,
  td {
    height: 17px;
    padding: 0;
    text-align: center;
    font-weight: normal;
    line-height: 14px;
  }
  thead th {
    height: 20px;
  }
`;

const DayHead = styled.th`
  width: 18px;
  border-bottom: 1px solid #b4b9b9;
`;

const WeekNo = styled.th`
  width: 16px;
  border-right: ${(props) => (props.$line ? "1px solid #b4b9b9" : "0")};
  font-size: 8px;
`;

const Day = styled.td`
  width: 18px;
  color: ${(props) => (props.$muted ? "#b4b8b8" : "#10141c")};
  box-shadow: ${(props) => (props.$today ? "inset 0 0 0 1px #b4b9b9" : "none")};
`;

const Splitter = styled.div`
  height: 9px;
  background:
    repeating-linear-gradient(90deg, #24304a 0 2px, transparent 2px 4px) center / 36px 2px no-repeat,
    linear-gradient(#e3eefa, #bfd2ea);
`;

const AsideIcons = styled.div`
  height: 32px;
  display: flex;
  justify-content: flex-end;
  margin-right: -7px;
  background: linear-gradient(#f4fafd, #d3e2f4);
`;

const AsideIcon = styled.button`
  width: 22px;
  display: flex;
  align-items: center;
  justify-content: center;
  background: ${(props) => (props.$active ? "#d5e5f6" : "none")};
`;

const StatusBar = styled.footer`
  height: 12px;
  flex: none;
  display: flex;
  align-items: flex-start;
  padding-left: 12px;
  overflow: hidden;
  background: linear-gradient(#e6f2fc, #c4d7ee);
  border-top: 1px solid #7f9bbd;
  color: #26355d;
  font: 11px ${ui};
  line-height: 20px;
  white-space: nowrap;

  ${IconSvg} {
    margin-right: 8px;
  }
`;

const StatusItem = styled.span`
  padding: 0 ${(props) => (props.$tight ? 2 : 10)}px 0 0;

  ${(props) =>
    props.$line &&
    css`
      padding-left: 7px;
      border-left: 1px solid #b4c4da;
    `}
`;

const StatusKeys = styled.div`
  display: flex;
  gap: 10px;
  margin-right: -8px;
`;

export default App;
